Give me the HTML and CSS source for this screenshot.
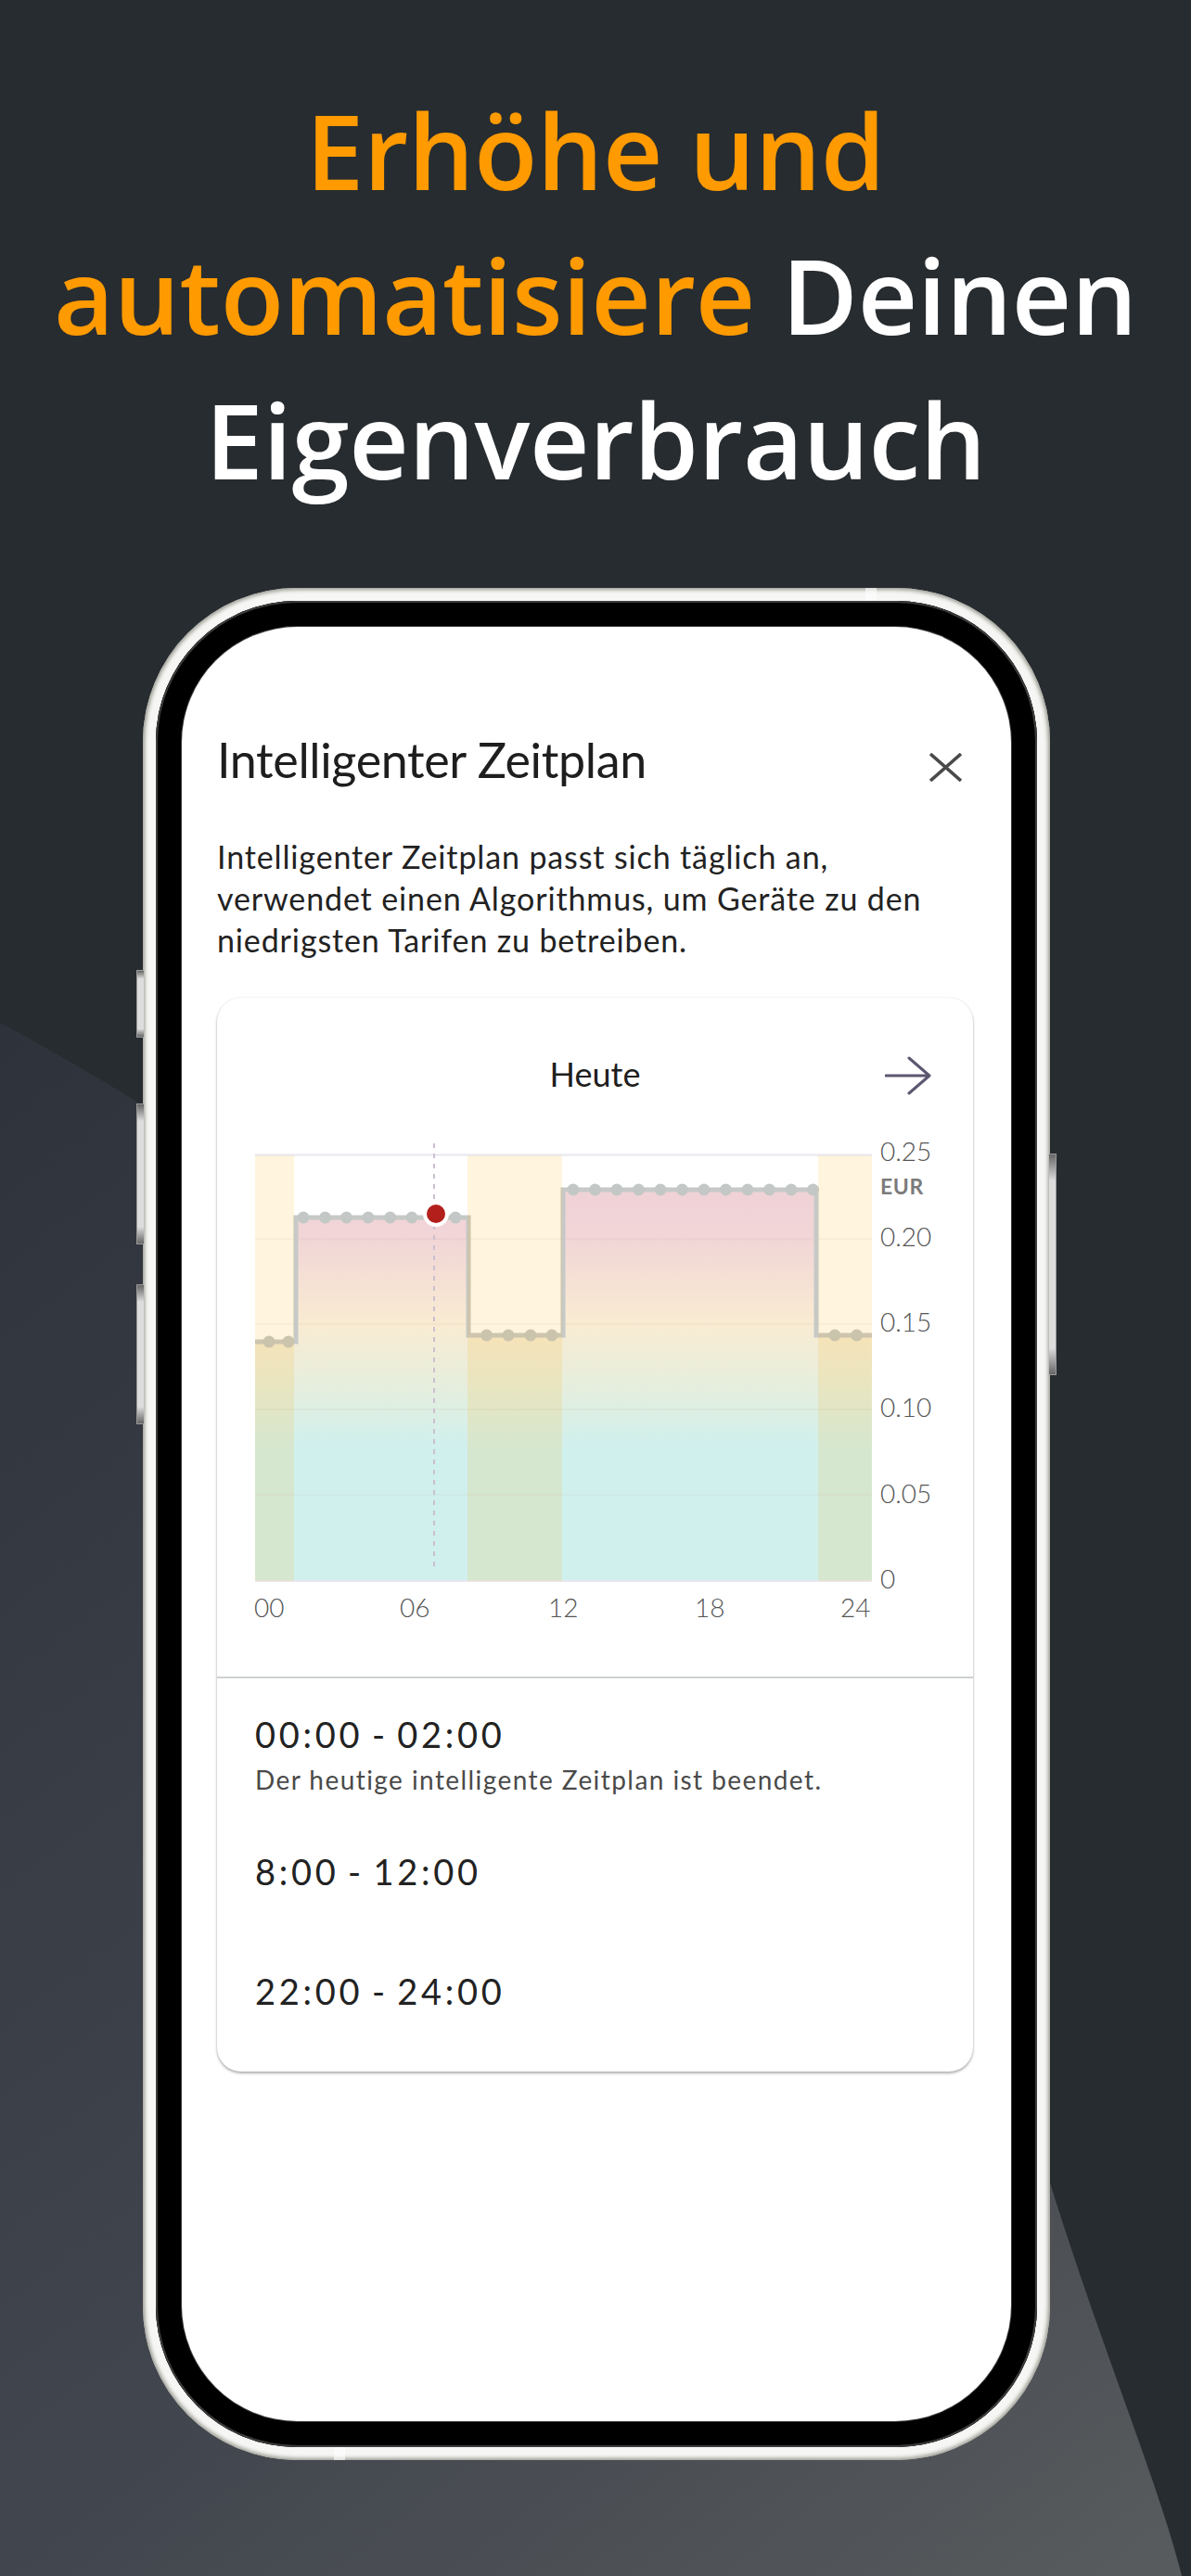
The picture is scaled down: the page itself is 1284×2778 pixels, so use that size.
FILE: index.html
```html
<!DOCTYPE html>
<html lang="de">
<head>
<meta charset="UTF-8">
<meta name="viewport" content="width=device-width, initial-scale=1.0">
<title>Intelligenter Zeitplan</title>
<link rel="stylesheet" href="styles.css">
</head>
<body>
<svg class="backdrop" viewBox="0 0 1284 2778" aria-hidden="true">
    <defs>
        <linearGradient id="blob" gradientUnits="userSpaceOnUse" x1="0" y1="1100" x2="1284" y2="2778">
            <stop offset="0" stop-color="#2e333b"/>
            <stop offset="0.64" stop-color="#42464e"/>
            <stop offset="1" stop-color="#585c5e"/>
        </linearGradient>
    </defs>
    <path d="M0 1103 C520 1380 1000 1880 1131 2351 C1190 2540 1250 2680 1274 2778 L0 2778 Z" fill="url(#blob)"/>
</svg>

<h1 class="headline">
    <span class="accent">Erhöhe und</span><br>
    <span class="accent">automatisiere</span> Deinen<br>
    Eigenverbrauch
</h1>

<div class="phone">
    <span class="side-btn btn-mute"></span>
    <span class="side-btn btn-up"></span>
    <span class="side-btn btn-down"></span>
    <span class="side-btn btn-power"></span>
    <span class="antenna ant-top"></span>
    <span class="antenna ant-bottom"></span>
    <div class="phone-black">
        <div class="screen">
            <div class="title-row">
                <h2 class="title">Intelligenter Zeitplan</h2>
                <svg class="close-icon" viewBox="0 0 35 31" aria-label="Schließen">
                    <path d="M1 1 L34 30 M34 1 L1 30" fill="none" stroke="#4a4a4a" stroke-width="3.6"/>
                </svg>
            </div>
            <p class="intro">Intelligenter Zeitplan passt sich täglich an,<br>verwendet einen Algorithmus, um Geräte zu den<br>niedrigsten Tarifen zu betreiben.</p>

            <div class="card">
                <div class="card-head">
                    <span></span>
                    <span class="card-title">Heute</span>
                    <svg class="arrow-icon" viewBox="0 0 50 42" aria-label="Weiter">
                        <path d="M1 21 H47 M26 2 L48 21 L26 40" fill="none" stroke="#5d5670" stroke-width="3" stroke-linecap="round" stroke-linejoin="round"/>
                    </svg>
                </div>

                <!-- viewBox is in screenshot coordinates, easier to read off -->
                <svg class="chart" viewBox="234 1220 815 588">
                    <defs>
                        <linearGradient id="price" gradientUnits="userSpaceOnUse" x1="0" y1="1283" x2="0" y2="1705">
                            <stop offset="0" stop-color="#f0d2d6"/>
                            <stop offset="0.12" stop-color="#f1d5d7"/>
                            <stop offset="0.34" stop-color="#f9ebd2"/>
                            <stop offset="0.50" stop-color="#e6eedd"/>
                            <stop offset="0.66" stop-color="#d0f0ee"/>
                            <stop offset="1" stop-color="#d0f0ee"/>
                        </linearGradient>
                    </defs>

                    <path d="M275 1447 H319 V1313 H505 V1440 H607 V1283 H880 V1440 H940 V1705 H275 Z" fill="url(#price)"/>

                    <g class="grid">
                        <path d="M275 1336 H940 M275 1428 H940 M275 1520 H940 M275 1612 H940"/>
                    </g>
                    <path class="axis" d="M275 1245.5 H940 M275 1705 H940"/>

                    <path class="dashed" d="M468 1233 V1694"/>

                    <path class="price-line" d="M275 1447 H319 V1313 H505 V1440 H607 V1283 H880 V1440 H940"/>
                    <g class="dots">
                        <circle cx="290" cy="1447" r="6.5"/><circle cx="311" cy="1447" r="6.5"/>
                        <circle cx="327" cy="1313" r="6.5"/><circle cx="350.5" cy="1313" r="6.5"/><circle cx="373.5" cy="1313" r="6.5"/><circle cx="397" cy="1313" r="6.5"/><circle cx="420.7" cy="1313" r="6.5"/><circle cx="444" cy="1313" r="6.5"/><circle cx="491" cy="1313" r="6.5"/>
                        <circle cx="524.6" cy="1440" r="6.5"/><circle cx="548" cy="1440" r="6.5"/><circle cx="572" cy="1440" r="6.5"/><circle cx="595" cy="1440" r="6.5"/>
                        <circle cx="618" cy="1283" r="6.5"/><circle cx="641.5" cy="1283" r="6.5"/><circle cx="665" cy="1283" r="6.5"/><circle cx="688.5" cy="1283" r="6.5"/><circle cx="712" cy="1283" r="6.5"/><circle cx="735.5" cy="1283" r="6.5"/><circle cx="759" cy="1283" r="6.5"/><circle cx="782.5" cy="1283" r="6.5"/><circle cx="806" cy="1283" r="6.5"/><circle cx="829.5" cy="1283" r="6.5"/><circle cx="853" cy="1283" r="6.5"/><circle cx="876.5" cy="1283" r="6.5"/>
                        <circle cx="900" cy="1440" r="6.5"/><circle cx="923.6" cy="1440" r="6.5"/>
                    </g>

                    <g class="bands">
                        <rect x="275" y="1246" width="42" height="459"/>
                        <rect x="504" y="1246" width="102" height="459"/>
                        <rect x="882" y="1246" width="58" height="459"/>
                    </g>

                    <circle cx="470" cy="1309" r="14" fill="#fff"/>
                    <circle cx="470" cy="1309" r="10" fill="#b3201b"/>

                    <g class="y-labels">
                        <text x="949" y="1252">0.25</text>
                        <text x="949" y="1344">0.20</text>
                        <text x="949" y="1436">0.15</text>
                        <text x="949" y="1528">0.10</text>
                        <text x="949" y="1621">0.05</text>
                        <text x="949" y="1713">0</text>
                    </g>
                    <text class="unit" x="949" y="1288">EUR</text>
                    <g class="x-labels">
                        <text x="274" y="1744">00</text>
                        <text x="431" y="1744">06</text>
                        <text x="591" y="1744">12</text>
                        <text x="749" y="1744">18</text>
                        <text x="906" y="1744">24</text>
                    </g>
                </svg>

                <div class="slots">
                    <div class="slot slot-note">
                        <div class="slot-time">00:00 - 02:00</div>
                        <div class="slot-text">Der heutige intelligente Zeitplan ist beendet.</div>
                    </div>
                    <div class="slot">
                        <div class="slot-time">8:00 - 12:00</div>
                    </div>
                    <div class="slot">
                        <div class="slot-time">22:00 - 24:00</div>
                    </div>
                </div>
            </div>
        </div>
    </div>
</div>
</body>
</html>
```

FILE: styles.css
```css
* {
    box-sizing: border-box;
}

body {
    margin: 0;
    padding: 0;
    width: 1284px;
    height: 2778px;
    overflow: hidden;
    position: relative;
    background-color: #272c30;
    font-family: Lato, "Liberation Sans", sans-serif;
}

.backdrop {
    position: absolute;
    top: 0;
    left: 0;
    width: 1284px;
    height: 2778px;
}

.headline {
    position: relative;
    margin: 0;
    padding-top: 84px;
    height: 634px;
    text-align: center;
    font-family: "Open Sans", sans-serif;
    font-size: 112px;
    font-weight: 600;
    letter-spacing: -0.25px;
    line-height: 156px;
    color: #fff;
}

.accent {
    color: #ff9a00;
}

/* phone frame */
.phone {
    position: relative;
    margin-left: 154px;
    width: 978px;
    height: 2019px;
    padding: 14px;
    border-radius: 166px;
    background-color: #f6f6f4;
    box-shadow: inset 0 0 4px 2px #98988f;
}

.side-btn {
    position: absolute;
    width: 8px;
    border: 1px solid #9a9a9a;
    border-right: none;
    background: linear-gradient(#666, #ddd 12%, #ddd 88%, #666);
}

.btn-mute { left: -7px; top: 412px; height: 73px; }
.btn-up { left: -7px; top: 556px; height: 152px; }
.btn-down { left: -7px; top: 751px; height: 151px; }

.btn-power {
    right: -7px;
    top: 610px;
    height: 239px;
    border-left: none;
    border-right: 1px solid #9a9a9a;
}

.antenna {
    position: absolute;
    width: 12px;
    height: 14px;
    background-color: #fff;
    opacity: 0.6;
}

.ant-top { left: 779px; top: 0; }
.ant-bottom { left: 206px; bottom: 0; }

.phone-black {
    height: 100%;
    padding: 28px;
    border-radius: 152px;
    background-color: #000;
    box-shadow: inset 0 0 0 2px #3c3c3c, inset 0 0 0 4px #000;
}

.screen {
    height: 100%;
    padding: 113px 41px 0 38px;
    border-radius: 125px;
    background-color: #fff;
    box-shadow: 0 0 0 1px #3c3c3c;
}

.title-row {
    display: flex;
    justify-content: space-between;
    align-items: center;
    height: 60px;
}

.title {
    margin: 0;
    font-size: 52px;
    font-weight: 400;
    letter-spacing: -0.35px;
    line-height: 60px;
    color: #1e1e1e;
}

.close-icon {
    width: 35px;
    height: 31px;
    margin: 16px 12px 0 0;
}

.intro {
    margin: 52px 0 40px;
    font-size: 34px;
    font-weight: 400;
    letter-spacing: 0.87px;
    line-height: 45px;
    color: #222;
}

/* card */
.card {
    width: 815px;
    height: 1158px;
    border-radius: 26px;
    background-color: #fff;
    box-shadow: 0 2px 3px rgba(0, 0, 0, 0.3), 0 0 2px rgba(0, 0, 0, 0.12);
}

.card-head {
    display: grid;
    grid-template-columns: 1fr auto 1fr;
    align-items: center;
    height: 144px;
    padding: 0 45px;
}

.card-title {
    font-size: 36px;
    font-weight: 400;
    color: #1e1e1e;
    padding-top: 20px;
}

.arrow-icon {
    width: 50px;
    height: 42px;
    justify-self: end;
    margin-top: 23px;
}

.chart {
    display: block;
    width: 815px;
    height: 588px;
}

.grid path {
    fill: none;
    stroke: rgba(190, 170, 140, 0.09);
    stroke-width: 2;
}

.axis {
    fill: none;
    stroke: #e8e7ef;
    stroke-width: 2;
}

.dashed {
    fill: none;
    stroke: #cbbfd0;
    stroke-width: 2;
    stroke-dasharray: 5 6;
}

.price-line {
    fill: none;
    stroke: #c6c9c7;
    stroke-width: 5;
}

.dots circle {
    fill: #c3c8c6;
}

.bands rect {
    fill: rgba(255, 170, 0, 0.13);
}

.y-labels text,
.x-labels text {
    font-size: 28px;
    font-weight: 300;
    fill: #555;
}

.unit {
    font-size: 23px;
    font-weight: 700;
    letter-spacing: 0.6px;
    fill: #7b7b7b;
}

.slots {
    border-top: 2px solid #cdd0d0;
    padding: 35px 41px 60px;
}

.slot {
    margin-bottom: 79px;
}

.slot-note {
    margin-bottom: 55px;
}

.slot:last-child {
    margin-bottom: 0;
}

.slot-time {
    font-size: 38px;
    font-weight: 400;
    letter-spacing: 3.75px;
    word-spacing: -4px;
    line-height: 50px;
    color: #222;
}

.slot-text {
    margin-top: 5px;
    font-size: 28px;
    font-weight: 400;
    letter-spacing: 1.43px;
    line-height: 38px;
    color: #4a4a4a;
}
```
